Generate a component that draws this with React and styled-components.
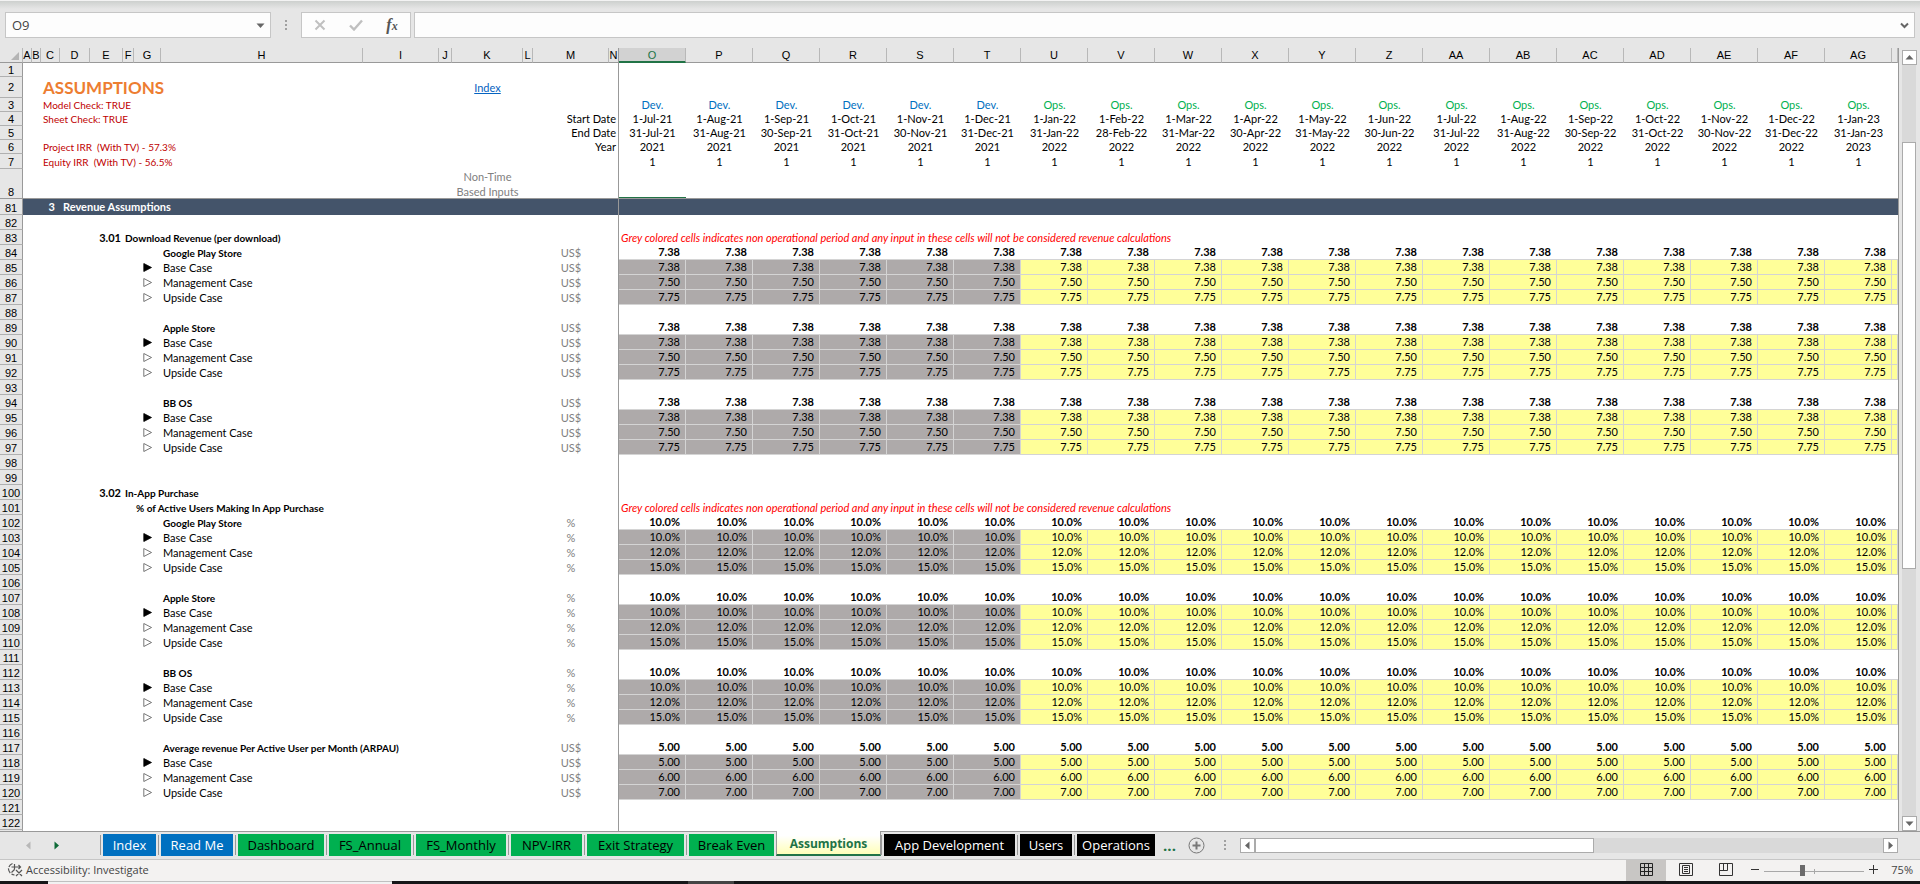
import React from "react";
import styled, { createGlobalStyle } from "styled-components";

const GlobalStyle = createGlobalStyle`
  * {
    box-sizing: border-box;
  }
  body {
    margin: 0;
    background: #e6e6e6;
  }
  button {
    padding: 0;
    border: none;
    background: transparent;
    font: inherit;
    color: inherit;
    cursor: pointer;
  }
`;

const Container = styled.div`
  display: flex;
  flex-direction: column;
  height: 100vh;
  overflow: hidden;
  background: #e6e6e6;
  color: #000;
  font-family: "Open Sans", "Noto Sans", sans-serif;
`;

/* formula bar */
const FormulaBar = styled.header`
  display: flex;
  align-items: flex-start;
  flex-shrink: 0;
  height: 48px;
  padding: 12px 5px 0;
  background: linear-gradient(to bottom, #f3f3f3 1px, #cdd0ce 1px, #e6e6e6 9px);
`;

const NameBox = styled.div`
  display: flex;
  width: 266px;
  height: 26px;
  border: 1px solid #c6c6c6;
  background: #fdfdfd;
`;

const NameInput = styled.input`
  flex: 1;
  min-width: 0;
  padding: 0 6px;
  border: none;
  outline: none;
  background: transparent;
  color: #444;
  font-family: "Open Sans", sans-serif;
  font-size: 13px;
`;

const DropButton = styled.button`
  display: flex;
  align-items: center;
  justify-content: center;
  width: 20px;
`;

const Grip = styled.div`
  display: flex;
  justify-content: center;
  align-items: center;
  width: 30px;
  height: 26px;
`;

const FormulaButtons = styled.div`
  display: grid;
  grid-template-columns: repeat(3, 1fr);
  align-items: center;
  justify-items: center;
  width: 110px;
  height: 26px;
  margin-right: 3px;
  border: 1px solid #c6c6c6;
  background: #fdfdfd;
`;

const FxButton = styled.button`
  width: 24px;
  color: #555;
  font-family: "Liberation Serif", serif;
  font-size: 16px;
  font-style: italic;
  font-weight: 700;
  line-height: 20px;
`;

const FxSub = styled.span`
  font-size: 12px;
`;

const FormulaInputBox = styled(NameBox)`
  flex: 1;
`;

/* sheet */
const SheetArea = styled.main`
  display: flex;
  flex: 1;
  min-height: 0;
`;

const GridPane = styled.div`
  flex: 1;
  min-width: 0;
  overflow: hidden;
  border-right: 1px solid #999;
  background: linear-gradient(to bottom, #e6e6e6 14px, #fff 14px);
`;

const Table = styled.table`
  width: 100%;
  min-width: 1898px;
  table-layout: fixed;
  border-collapse: separate;
  border-spacing: 0;
  font-family: Lato, sans-serif;
  font-size: 11px;
  line-height: 14px;
`;

const Col = styled.col`
  width: ${(p) => (p.$w ? `${p.$w}px` : "auto")};
`;

const HeadCell = styled.th`
  height: 15px;
  padding: 0;
  overflow: visible;
  border-right: 1px solid ${(p) => (p.$freeze ? "#999" : "#b8b8b8")};
  border-bottom: ${(p) => (p.$active ? "2px solid #217346" : "1px solid #999")};
  background: ${(p) => (p.$active ? "#d2d2d2" : "#e6e6e6")};
  color: ${(p) => (p.$active ? "#217346" : "#000")};
  font-family: "Liberation Sans", sans-serif;
  font-size: 11px;
  font-weight: 400;
  line-height: 12px;
  text-align: center;
`;

const HeadText = styled.span`
  display: flex;
  justify-content: center;
`;

const RowHead = styled.th`
  height: ${(p) => p.$h}px;
  padding: 0;
  border-right: 1px solid #999;
  border-bottom: 1px solid ${(p) => (p.$freeze ? "#999" : "#b0b0b0")};
  background: #e6e6e6;
  font-family: "Liberation Sans", sans-serif;
  font-size: 11px;
  font-weight: 400;
  line-height: 12px;
  text-align: center;
  vertical-align: ${(p) => (p.$h === 21 ? "middle" : "bottom")};
`;

const Cell = styled.td`
  padding: 0 2px;
  border-right: ${(p) => (p.$freeze ? "1px solid #999" : "none")};
  color: ${(p) => p.$color || "#000"};
  font-size: ${(p) => (p.$small ? 10 : 11)}px;
  font-weight: ${(p) => (p.$bold ? 700 : 400)};
  font-style: ${(p) => (p.$italic ? "italic" : "normal")};
  text-align: ${(p) => p.$align || "left"};
  vertical-align: ${(p) => (p.$middle ? "middle" : "bottom")};
  white-space: pre;
`;

const FrozenRow = styled.tr`
  &:last-child td {
    box-shadow: inset 0 -1px 0 #999;
  }
  &:last-child td.edge {
    box-shadow: inset 0 -1px 0 #999, inset 0 -2px 0 #217346;
  }
`;

const Title = styled.h1`
  margin: 0;
  color: #ed7d31;
  font-size: 17px;
  font-weight: 700;
  line-height: 19px;
`;

const IndexLink = styled.a`
  color: #0563c1;
`;

const InputsNote = styled.div`
  line-height: 15px;
  white-space: normal;
`;

const BandCell = styled(Cell)`
  padding-right: 5px;
  padding-left: 3px;
  background: #44546a;
  color: #fff;
  font-weight: 700;
  line-height: 16px;
`;

const Total = styled(Cell)`
  padding-right: 6px;
  border-bottom: 1px solid #d4d4d4;
  font-weight: 700;
  text-align: right;
`;

const Entry = styled(Cell)`
  padding-right: 5px;
  border-right: 1px solid #d4d4d4;
  border-bottom: 1px solid #d4d4d4;
  background: ${(p) => (p.$dev ? "#aeaaaa" : "#ffff99")};
  text-align: right;
`;

const Marker = styled.svg`
  display: block;
  margin: 0 auto 3px;
`;

/* scroll bars */
const VScroll = styled.div`
  display: flex;
  flex-direction: column;
  width: 21px;
  padding: 2px 4px 0 3px;
`;

const ScrollButton = styled.button`
  display: flex;
  align-items: center;
  justify-content: center;
  flex-shrink: 0;
  width: 15px;
  height: 15px;
  border: 1px solid #ababab;
  background: #fff;
`;

const VTrack = styled.div`
  display: flex;
  flex-direction: column;
  flex: 1;
  padding-top: 77px;
  background: #d9d9d9;
`;

const VThumb = styled.div`
  height: 427px;
  border: 1px solid #ababab;
  background: #fff;
`;

const HScroll = styled.div`
  display: flex;
  flex: 1;
  margin-right: 22px;
`;

const HTrack = styled.div`
  display: flex;
  flex: 1;
  background: #d9d9d9;
`;

const HThumb = styled.div`
  width: 54%;
  border: 1px solid #ababab;
  background: #fff;
`;

/* sheet tabs */
const TabBar = styled.nav`
  display: flex;
  align-items: center;
  flex-shrink: 0;
  height: 29px;
  border-bottom: 1px solid #c6c6c6;
`;

const TabLine = styled.div`
  display: flex;
  align-items: center;
  align-self: stretch;
  width: ${(p) => (p.$w ? `${p.$w}px` : "auto")};
  flex: ${(p) => (p.$grow ? 1 : "none")};
  padding-left: ${(p) => p.$pad || 0}px;
  padding-bottom: 1px;
  border-top: 1px solid #999;
`;

const NavArrow = styled.button`
  display: flex;
  width: 28px;
`;

const tabColors = {
  blue: { bg: "#0070c0", fg: "#fff" },
  green: { bg: "#00b050", fg: "#000" },
  black: { bg: "#000", fg: "#fff" },
};

const TabSlot = styled.div`
  align-self: stretch;
  width: ${(p) => p.$w}px;
  padding: 2px 2px 0;
  border-top: 1px solid #999;
`;

const Tab = styled.button`
  display: block;
  width: 100%;
  height: 22px;
  overflow: hidden;
  background: ${(p) => tabColors[p.$tone].bg};
  color: ${(p) => tabColors[p.$tone].fg};
  font-size: 13px;
  line-height: 20px;
  text-align: center;
  white-space: nowrap;
`;

const ActiveTab = styled.button`
  align-self: flex-start;
  width: 105px;
  height: 25px;
  padding-top: 3px;
  border-left: 1px solid #999;
  border-right: 1px solid #999;
  border-bottom: 2px solid #217346;
  background: linear-gradient(to bottom, #fff 20%, #ffffb8);
  color: #217346;
  font-size: 12px;
  font-weight: 700;
  line-height: 20px;
  white-space: nowrap;
`;

const Divider = styled.span`
  width: 1px;
  height: 20px;
  background: #999;
`;

const More = styled.button`
  width: 25px;
  color: #217346;
  font-size: 15px;
  font-weight: 700;
  line-height: 20px;
`;

const AddButton = styled.button`
  display: flex;
  justify-content: center;
  width: 28px;
`;

/* status bar */
const StatusBar = styled.footer`
  display: flex;
  align-items: center;
  flex-shrink: 0;
  height: 21px;
  padding: 0 7px;
  background: #f3f2f1;
  color: #444;
  font-size: 11px;
`;

const Accessibility = styled.button`
  display: flex;
  align-items: center;
  gap: 2px;
  margin-right: auto;
  padding-bottom: 2px;
`;

const ViewButton = styled.button`
  display: flex;
  align-items: center;
  justify-content: center;
  width: 40px;
  height: 21px;
  padding-bottom: 2px;
  background: ${(p) => (p.$active ? "#c8c6c4" : "transparent")};
`;

const ZoomButton = styled.button`
  display: flex;
  justify-content: center;
  width: 18px;
  padding-bottom: 2px;
`;

const ZoomSlider = styled.input`
  width: 100px;
  height: 16px;
  margin: 0;
  appearance: none;
  background: linear-gradient(#a8a8a8, #a8a8a8) 0 8px / 100% 1px no-repeat,
    linear-gradient(#a8a8a8, #a8a8a8) 50px 6px / 1px 5px no-repeat;

  &::-webkit-slider-thumb {
    appearance: none;
    width: 5px;
    height: 11px;
    background: #6b6b6b;
  }
`;

const ZoomValue = styled.span`
  width: 31px;
  padding-bottom: 2px;
  text-align: right;
`;

const Desktop = styled.div`
  display: flex;
  flex-shrink: 0;
  height: 3px;
  background: #161618;
`;

const DesktopSearch = styled.div`
  width: 344px;
  margin-left: 48px;
  border-top: 1px solid #c0c0c0;
  background: #f2f2f2;
`;

const DesktopItem = styled.div`
  width: 46px;
  margin-left: 296px;
  background: #444;
`;

const leftColumns = [
  ["A", 9],
  ["B", 9],
  ["C", 19],
  ["D", 30],
  ["E", 33],
  ["F", 11],
  ["G", 27],
  ["H", 202],
  ["I", 76],
  ["J", 13],
  ["K", 71],
  ["L", 10],
  ["M", 76],
  ["N", 10],
];

const MONTHS = "Jan Feb Mar Apr May Jun Jul Aug Sep Oct Nov Dec".split(" ");
const COLUMN_NAMES = "O P Q R S T U V W X Y Z AA AB AC AD AE AF AG".split(" ");

// the model starts in July 2021, the first six months are development
const periods = COLUMN_NAMES.map((name, i) => {
  const month = (6 + i) % 12;
  const year = 2021 + Math.floor((6 + i) / 12);
  const lastDay = new Date(year, month + 1, 0).getDate();
  const suffix = `${MONTHS[month]}-${year - 2000}`;
  return {
    name,
    year,
    dev: i < 6,
    start: `1-${suffix}`,
    end: `${lastDay}-${suffix}`,
  };
});

const NOTE =
  "Grey colored cells indicates non operational period and any input in these cells will not be considered revenue calculations";

const block = (label, unit, values) => [
  { type: "total", label, unit, value: values[0] },
  { type: "case", label: "Base Case", unit, value: values[0], active: true },
  { type: "case", label: "Management Case", unit, value: values[1] },
  { type: "case", label: "Upside Case", unit, value: values[2] },
  { type: "empty" },
];

const PRICES = ["7.38", "7.50", "7.75"];
const SHARES = ["10.0%", "12.0%", "15.0%"];
const ARPAU = ["5.00", "6.00", "7.00"];

const rows = [
  { type: "empty" },
  { type: "section", code: "3.01", label: "Download Revenue (per download)", note: NOTE },
  ...block("Google Play Store", "US$", PRICES),
  ...block("Apple Store", "US$", PRICES),
  ...block("BB OS", "US$", PRICES),
  { type: "empty" },
  { type: "section", code: "3.02", label: "In-App Purchase" },
  { type: "sub", label: "% of Active Users Making In App Purchase", note: NOTE },
  ...block("Google Play Store", "%", SHARES),
  ...block("Apple Store", "%", SHARES),
  ...block("BB OS", "%", SHARES),
  ...block("Average revenue Per Active User per Month (ARPAU)", "US$", ARPAU),
  { type: "empty" },
  { type: "empty" },
];

const tabsBefore = [
  ["Index", "blue", 58],
  ["Read Me", "blue", 77],
  ["Dashboard", "green", 91],
  ["FS_Annual", "green", 87],
  ["FS_Monthly", "green", 95],
  ["NPV-IRR", "green", 76],
  ["Exit Strategy", "green", 102],
  ["Break Even", "green", 90],
];

const tabsAfter = [
  ["App Development", "black", 136],
  ["Users", "black", 57],
  ["Operations", "black", 83],
];

function Triangle({ dir = "down", color = "#666" }) {
  const turn = { down: 0, left: 90, up: 180, right: 270 }[dir];
  return (
    <svg width="9" height="9" viewBox="0 0 9 9" aria-hidden="true">
      <path d="M.5 2.500h8L4.500 7z" fill={color} transform={`rotate(${turn} 4.5 4.5)`} />
    </svg>
  );
}

function CaseMarker({ active }) {
  return (
    <Marker width="9" height="9" viewBox="0 0 9 9" aria-hidden="true">
      <path
        d="M.8.5v8L8.500 4.500z"
        fill={active ? "#000" : "#fff"}
        stroke={active ? "#000" : "#555"}
        strokeWidth="0.8"
      />
    </Marker>
  );
}

function GripDots() {
  return (
    <svg width="3" height="12" viewBox="0 0 3 12" fill="#a0a0a0" aria-hidden="true">
      <path d="M0 1h2v2H0zM0 5h2v2H0zM0 9h2v2H0z" />
    </svg>
  );
}

function HeaderRow({ number, height, title, link, side, pick, color }) {
  return (
    <FrozenRow>
      <RowHead scope="row" $h={height} $freeze={number === 8}>
        {number}
      </RowHead>
      <Cell colSpan={2} />
      <Cell colSpan={8} $color="#c00000" $small $middle={number === 2}>
        {title}
      </Cell>
      <Cell $align="center" $color="#808080" $middle={number === 2}>
        {link}
      </Cell>
      <Cell colSpan={3} $align="right" $freeze>
        {side}
      </Cell>
      {periods.map((p, i) => (
        <Cell
          key={p.name}
          className={i === 0 ? "edge" : undefined}
          $align="center"
          $color={color && color(p)}
        >
          {pick && pick(p)}
        </Cell>
      ))}
      <Cell />
    </FrozenRow>
  );
}

function RowLabel({ row }) {
  if (row.type === "section") {
    return (
      <>
        <Cell colSpan={5} $align="right" $bold>
          {row.code}
        </Cell>
        <Cell colSpan={9} $bold $small $freeze>
          {row.label}
        </Cell>
      </>
    );
  }
  if (row.type === "sub") {
    return (
      <>
        <Cell colSpan={6} />
        <Cell colSpan={8} $bold $small $freeze>
          {row.label}
        </Cell>
      </>
    );
  }
  if (row.type === "empty") {
    return <Cell colSpan={14} $freeze />;
  }
  const isTotal = row.type === "total";
  return (
    <>
      <Cell colSpan={6} />
      <Cell>{!isTotal && <CaseMarker active={row.active} />}</Cell>
      <Cell colSpan={5} $bold={isTotal} $small={isTotal}>
        {row.label}
      </Cell>
      <Cell $align="center" $color="#808080">
        {row.unit}
      </Cell>
      <Cell $freeze />
    </>
  );
}

function RowValues({ row }) {
  if (row.type === "total") {
    return (
      <>
        {periods.map((p) => (
          <Total key={p.name}>{row.value}</Total>
        ))}
        <Total />
      </>
    );
  }
  if (row.type === "case") {
    return (
      <>
        {periods.map((p) => (
          <Entry key={p.name} $dev={p.dev}>
            {row.value}
          </Entry>
        ))}
        <Entry />
      </>
    );
  }
  return (
    <Cell colSpan={20} $italic $color="#ff0000">
      {row.note}
    </Cell>
  );
}

function Sheet() {
  return (
    <Table>
      <colgroup>
        <Col $w={23} />
        {leftColumns.map(([name, width]) => (
          <Col key={name} $w={width} />
        ))}
        {periods.map((p) => (
          <Col key={p.name} $w={67} />
        ))}
        <Col />
      </colgroup>
      <thead>
        <tr>
          <HeadCell>
            <svg width="22" height="12" viewBox="0 0 22 12" display="block" aria-hidden="true">
              <path d="M19 3v8h-8z" fill="#b4b4b4" />
            </svg>
          </HeadCell>
          {leftColumns.map(([name]) => (
            <HeadCell key={name} scope="col" $freeze={name === "N"}>
              <HeadText>{name}</HeadText>
            </HeadCell>
          ))}
          {periods.map((p) => (
            <HeadCell key={p.name} scope="col" $active={p.name === "O"}>
              {p.name}
            </HeadCell>
          ))}
          <HeadCell />
        </tr>
      </thead>
      <tbody>
        <HeaderRow number={1} height={14} />
        <HeaderRow
          number={2}
          height={21}
          title={<Title>ASSUMPTIONS</Title>}
          link={<IndexLink href="#index">Index</IndexLink>}
        />
        <HeaderRow
          number={3}
          height={14}
          title="Model Check: TRUE"
          pick={(p) => (p.dev ? "Dev." : "Ops.")}
          color={(p) => (p.dev ? "#0070c0" : "#00b050")}
        />
        <HeaderRow
          number={4}
          height={14}
          title="Sheet Check: TRUE"
          side="Start Date"
          pick={(p) => p.start}
        />
        <HeaderRow number={5} height={14} side="End Date" pick={(p) => p.end} />
        <HeaderRow
          number={6}
          height={14}
          title="Project IRR  (With TV) - 57.3%"
          side="Year"
          pick={(p) => p.year}
        />
        <HeaderRow
          number={7}
          height={15}
          title="Equity IRR  (With TV) - 56.5%"
          pick={() => "1"}
        />
        <HeaderRow
          number={8}
          height={30}
          link={<InputsNote>Non-Time Based Inputs</InputsNote>}
        />
      </tbody>
      <tbody>
        <tr>
          <RowHead scope="row" $h={16}>
            81
          </RowHead>
          <BandCell colSpan={3} $align="right">
            3
          </BandCell>
          <BandCell colSpan={11} $freeze>
            Revenue Assumptions
          </BandCell>
          <BandCell colSpan={20} />
        </tr>
        {rows.map((row, i) => (
          <tr key={i}>
            <RowHead scope="row" $h={15}>
              {82 + i}
            </RowHead>
            <RowLabel row={row} />
            <RowValues row={row} />
          </tr>
        ))}
      </tbody>
    </Table>
  );
}

function SheetTab({ tab: [label, tone, width] }) {
  return (
    <>
      <TabLine>
        <Divider />
      </TabLine>
      <TabSlot $w={width - 1}>
        <Tab $tone={tone}>{label}</Tab>
      </TabSlot>
    </>
  );
}

function App() {
  return (
    <Container>
      <GlobalStyle />
      <FormulaBar>
        <NameBox>
          <NameInput aria-label="Name box" defaultValue="O9" />
          <DropButton aria-label="Show names">
            <Triangle />
          </DropButton>
        </NameBox>
        <Grip>
          <GripDots />
        </Grip>
        <FormulaButtons>
          <button aria-label="Cancel">
            <svg width="12" height="12" viewBox="0 0 12 12" display="block">
              <path d="M1.500 1.500l9 9M10.500 1.500l-9 9" stroke="#c0c0c0" strokeWidth="2" />
            </svg>
          </button>
          <button aria-label="Enter">
            <svg width="14" height="12" viewBox="0 0 14 12" display="block">
              <path d="M1 6.500l4 4 8-9" fill="none" stroke="#c0c0c0" strokeWidth="2.400" />
            </svg>
          </button>
          <FxButton aria-label="Insert function">
            f<FxSub>x</FxSub>
          </FxButton>
        </FormulaButtons>
        <FormulaInputBox>
          <NameInput aria-label="Formula" />
          <DropButton aria-label="Expand formula bar">
            <svg width="9" height="7" viewBox="0 0 9 7">
              <path d="M1 1.500l3.500 3.500L8 1.500" fill="none" stroke="#666" strokeWidth="2" />
            </svg>
          </DropButton>
        </FormulaInputBox>
      </FormulaBar>

      <SheetArea>
        <GridPane>
          <Sheet />
        </GridPane>
        <VScroll>
          <ScrollButton aria-label="Scroll up">
            <Triangle dir="up" />
          </ScrollButton>
          <VTrack>
            <VThumb />
          </VTrack>
          <ScrollButton aria-label="Scroll down">
            <Triangle />
          </ScrollButton>
        </VScroll>
      </SheetArea>

      <TabBar>
        <TabLine $w={100} $pad={24}>
          <NavArrow aria-label="Previous sheets">
            <Triangle dir="left" color="#b8b8b8" />
          </NavArrow>
          <NavArrow aria-label="Next sheets">
            <Triangle dir="right" color="#0e6b38" />
          </NavArrow>
        </TabLine>
        {tabsBefore.map((tab) => (
          <SheetTab key={tab[0]} tab={tab} />
        ))}
        <ActiveTab>Assumptions</ActiveTab>
        {tabsAfter.map((tab) => (
          <SheetTab key={tab[0]} tab={tab} />
        ))}
        <TabLine $grow>
          <More aria-label="More sheets">...</More>
          <AddButton aria-label="New sheet">
            <svg width="17" height="17" viewBox="0 0 17 17" fill="none" stroke="#777">
              <circle cx="8.5" cy="8.5" r="7.5" />
              <path d="M8.500 4.500v8M4.500 8.500h8" strokeWidth="2" />
            </svg>
          </AddButton>
          <Grip>
            <GripDots />
          </Grip>
          <HScroll>
            <ScrollButton aria-label="Scroll left">
              <Triangle dir="left" />
            </ScrollButton>
            <HTrack>
              <HThumb />
            </HTrack>
            <ScrollButton aria-label="Scroll right">
              <Triangle dir="right" />
            </ScrollButton>
          </HScroll>
        </TabLine>
      </TabBar>

      <StatusBar>
        <Accessibility>
          <svg width="17" height="15" viewBox="0 0 17 15" fill="none" stroke="#555">
            <path
              d="M5.500 1.500a6 6 0 0 0-4 5.500 6.500 6.500 0 0 0 6 6"
              strokeDasharray="5 1.500"
              strokeWidth="1.200"
            />
            <path d="M7.500 2v5.500M7.500 7.500l-3 3M4.500 5h9M11.500 3l2 2-2 2M9 8l6 6M15 8l-6 6" strokeWidth="1.200" />
          </svg>
          Accessibility: Investigate
        </Accessibility>
        <ViewButton aria-label="Normal view" $active>
          <svg width="13" height="13" viewBox="0 0 13 13" fill="none" stroke="#222">
            <path d="M.5.5h12v12H.5zM4.500.5v12M8.500.5v12M.5 4.500h12M.5 8.500h12" />
          </svg>
        </ViewButton>
        <ViewButton aria-label="Page layout">
          <svg width="14" height="13" viewBox="0 0 14 13" fill="none" stroke="#333">
            <path d="M.5.5h13v12H.5zM3.500 2.500h7v8h-7zM5 4.500h4M5 6.500h4M5 8.500h4" />
          </svg>
        </ViewButton>
        <ViewButton aria-label="Page break preview">
          <svg width="14" height="13" viewBox="0 0 14 13" fill="none" stroke="#333">
            <path d="M.5.5h13v12H.5zM4.500.5v7M8.500.5v7M.5 7.500h8" />
          </svg>
        </ViewButton>
        <ZoomButton aria-label="Zoom out">
          <svg width="9" height="9" viewBox="0 0 9 9">
            <path d="M0 4.500h8" stroke="#333" strokeWidth="1" />
          </svg>
        </ZoomButton>
        <ZoomSlider type="range" aria-label="Zoom" min="0" max="200" defaultValue="75" />
        <ZoomButton aria-label="Zoom in">
          <svg width="9" height="9" viewBox="0 0 9 9">
            <path d="M0 4.500h9M4.500 0v9" stroke="#333" strokeWidth="1" />
          </svg>
        </ZoomButton>
        <ZoomValue>75%</ZoomValue>
      </StatusBar>
      <Desktop>
        <DesktopSearch />
        <DesktopItem />
      </Desktop>
    </Container>
  );
}

export default App;
